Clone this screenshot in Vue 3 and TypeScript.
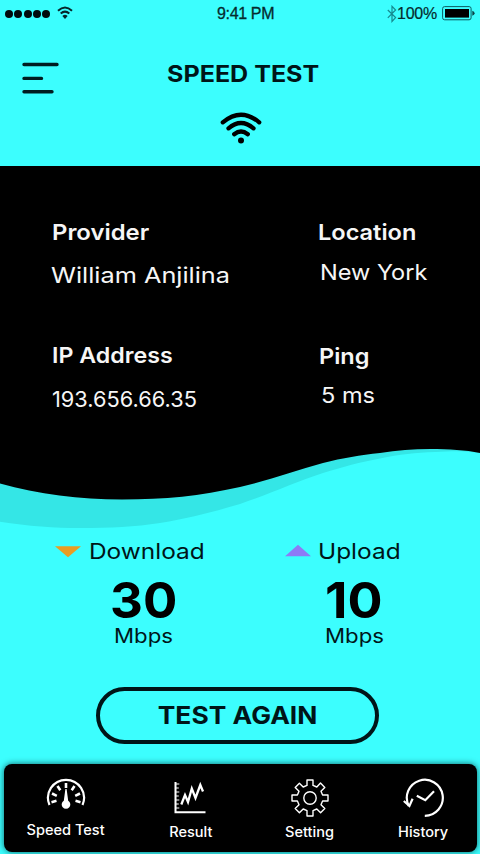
<script setup lang="ts">
interface Detail {
  id: string
  label: string
  value: string
}

interface Reading {
  id: string
  label: string
  value: number
  unit: string
}

const details: Detail[] = [
  { id: 'provider', label: 'Provider', value: 'William Anjilina' },
  { id: 'location', label: 'Location', value: 'New York' },
  { id: 'ip', label: 'IP Address', value: '193.656.66.35' },
  { id: 'ping', label: 'Ping', value: '5 ms' },
]

const readings: Reading[] = [
  { id: 'download', label: 'Download', value: 30, unit: 'Mbps' },
  { id: 'upload', label: 'Upload', value: 10, unit: 'Mbps' },
]
</script>

<template>
  <main class="screen">
    <div class="status">
      <div class="signal">
        <i v-for="n in 5" :key="n" class="dot"></i>
        <svg class="wifi-small" width="16" height="14" viewBox="0 0 16 14" fill="none" stroke="#06262a" stroke-width="2">
          <path d="M1 4.8Q8 -1.7 15 4.8M3.7 7.6Q8 3.7 12.3 7.6" />
          <path d="M5.4 10Q8 7.4 10.6 10L8 13Z" fill="#06262a" stroke="none" />
        </svg>
      </div>
      <span class="clock">9:41 PM</span>
      <div class="power">
        <svg width="10" height="18" viewBox="0 0 10 18" fill="none" stroke="#158a8f" stroke-width="1.2">
          <path d="M.8 5 8.6 12.6 5 16.5V1.3L8.6 5 .8 12.8" />
        </svg>
        <span class="percent">100%</span>
        <svg class="battery" width="33" height="15" viewBox="0 0 33 15">
          <rect x=".6" y=".6" width="28.5" height="13.2" rx="2" fill="none" stroke="#0b5d62" />
          <rect x="3" y="3" width="24" height="8.6" fill="#000" />
          <path d="M30.3 4.8Q32.6 5.6 32.6 7.3T30.3 9.8Z" fill="#0b4347" />
        </svg>
      </div>
    </div>

    <header class="header">
      <svg class="menu" width="38" height="32" viewBox="0 0 38 32" stroke="#001d20" stroke-width="3.4" stroke-linecap="round">
        <path d="M2 2.5H35M2 16.4H19.5M2 29.8H30" />
      </svg>
      <h1 class="title"><span class="wide">SPEED TEST</span></h1>
      <svg class="wifi" width="42" height="32" viewBox="0 0 42 32" fill="none" stroke="#000" stroke-width="4.3" stroke-linecap="round">
        <path d="M2.8 10.3Q21 -5 39.2 10.3M8.5 16.3Q21 5.8 33.5 16.3M14.2 22.2Q21 16.8 27.8 22.2" />
        <circle cx="21" cy="28.4" r="3" fill="#000" stroke="none" />
      </svg>
    </header>

    <section class="details">
      <div v-for="d in details" :key="d.id" class="detail" :class="d.id">
        <h2><span class="wide">{{ d.label }}</span></h2>
        <p><span class="wide">{{ d.value }}</span></p>
      </div>
    </section>

    <svg class="wave" width="480" height="90" viewBox="0 0 480 90">
      <path d="M0 81.7C28 86 55 88 80 88C110 88 135 87 160 83C190 78 213 72 240 64C270 54 295 42 323 33C343 27 360 22 380 18.5C400 14.5 415 12.5 435 12C455 11 465 11 480 13V0H0Z" fill="#34e6e6" />
      <path d="M0 43.5C38 54 80 59.5 122 59.5C165 59.5 200 56 240 47C270 40 295 30.5 323 23C343 18 360 15 380 13C397 10.5 413 9 430 9C450 9 465 10 480 13V0H0Z" fill="#000" />
    </svg>

    <section class="readings">
      <div v-for="r in readings" :key="r.id" class="reading" :class="r.id">
        <div class="caption">
          <svg width="26" height="14" viewBox="0 0 26 14">
            <path v-if="r.id === 'download'" d="M0 2.3H26L13 13.3Z" fill="#e99d22" />
            <path v-else d="M0 12.3H26L13 .8Z" fill="#8d7bf6" />
          </svg>
          <span class="wide">{{ r.label }}</span>
        </div>
        <strong class="amount"><span class="wide">{{ r.value }}</span></strong>
        <span class="unit"><span class="wide">{{ r.unit }}</span></span>
      </div>
    </section>

    <button class="again" type="button"><span class="wide">TEST AGAIN</span></button>

    <nav class="tabs">
      <a class="tab speed">
        <svg width="40" height="36" viewBox="0 0 40 36" fill="none" stroke="#fff" stroke-width="2.2">
          <path d="M3.5 30A18 18 0 1 1 36.5 30" />
          <path d="M20 8V13M11.5 11 14.3 15.2M28.5 11 25.7 15.2M6 18.5 10.8 20.8M34 18.5 29.2 20.8M5.5 27.2 10.5 25.8M34.5 27.2 29.5 25.8" stroke-width="2.6" />
          <path d="M19.4 14H20.6L22.2 25.7A4.3 4.3 0 1 1 17.8 25.7Z" fill="#fff" stroke="none" />
        </svg>
        <span class="wide">Speed Test</span>
      </a>
      <a class="tab result">
        <svg width="40" height="36" viewBox="0 0 40 36" fill="none" stroke="#fff">
          <path d="M4.5 3V33.3H34.5" stroke-width="2" />
          <path d="M5 5H8.3M5 9H7.8M5 13H8.3M5 17H7.8M5 21H8.3M5 25H7.8M5 29H8.3" stroke-width="1.2" />
          <path d="M10.3 25.5 14 16 17 23 20.8 9.5 24.5 19 29.3 6 32 12.5" stroke-width="2.3" />
        </svg>
        <span class="wide">Result</span>
      </a>
      <a class="tab setting">
        <svg width="40" height="40" viewBox="0 0 40 40" fill="none" stroke="#fff" stroke-width="1.4" stroke-linejoin="round">
          <path d="M17 2H23V7.4L26.8 9 30.5 5.1 34.8 9.4 31 13.2 32.6 17H38V23H32.6L31 26.8 34.8 30.6 30.6 34.8 26.8 31 23 32.6V38H17V32.6L13.2 31 9.4 34.8 5.2 30.6 9 26.8 7.4 23H2V17H7.4L9 13.2 5.2 9.4 9.4 5.2 13.2 9 17 7.4Z" />
          <circle cx="20" cy="20" r="6.2" />
        </svg>
        <span class="wide">Setting</span>
      </a>
      <a class="tab history">
        <svg width="42" height="40" viewBox="0 0 42 40" fill="none" stroke="#fff" stroke-width="2.2">
          <path d="M5.8 28A18 18 0 1 1 21.8 37.8" />
          <path d="M.8 23 6.4 28 9.6 20.8" />
          <path d="M13.8 17.7 22.3 22.2 31 13.2" />
        </svg>
        <span class="wide">History</span>
      </a>
    </nav>
  </main>
</template>

<style>
body {
  background: #3ff;
}
</style>

<style scoped>
.screen {
  display: flex;
  flex-direction: column;
  width: 480px;
  height: 854px;
  overflow: hidden;
  background: #3cfefe;
  color: #001518;
  font-family: Inter, "Open Sans", sans-serif;
}
h1, h2, p { margin: 0; }
span { white-space: nowrap; }
.wide {
  display: inline-block;
  transform: scaleX(var(--stretch, 1.07));
  transform-origin: 0 50%;
}

.status {
  display: grid;
  grid-template-columns: 217px 170px 1fr;
  height: 27px;
  font-family: "Liberation Sans", sans-serif;
  font-size: 16px;
  line-height: 27px;
  color: #062b2e;
}
.signal { display: flex; align-items: center; gap: 1.3px; padding-left: 5px; }
.dot { width: 8px; height: 8px; border-radius: 50%; background: #000b0c; }
.wifi-small { margin: -2px 0 0 6px; }
.clock { letter-spacing: -0.35px; -webkit-text-stroke: 0.3px; }
.power { display: flex; align-items: center; }
.percent { letter-spacing: -0.25px; -webkit-text-stroke: 0.2px; }
.battery { margin-left: 5px; }

.header {
  display: grid;
  grid-template-columns: 22px 143px 1fr;
  grid-template-rows: 92px 47px;
  height: 139px;
}
.menu { grid-column: 2; margin-top: 34.5px; }
.title {
  --stretch: 1.09;
  grid-column: 3;
  padding-left: 1.5px;
  font-size: 23px;
  font-weight: 650;
  line-height: 94px;
}
.wifi { grid-column: 3; grid-row: 2; margin: -7px 0 0 54.5px; }

.details {
  display: grid;
  grid-template-columns: 267px 1fr;
  grid-template-rows: 123px 113px;
  height: 226px;
  padding: 51px 0 0 51px;
  background: #000;
  color: #f6f6f6;
}
.detail h2 { padding-left: 1px; font-size: 22px; font-weight: 600; line-height: 30px; }
.detail p { font-size: 22px; font-weight: 400; line-height: 30px; }
.provider h2 { --stretch: 1.085; }
.provider p { --stretch: 1.15; margin-top: 13px; }
.location h2 { padding-left: 0; }
.location p { margin-top: 10px; padding-left: 1.5px; }
.ip h2 { --stretch: 1.055; }
.ip p { --stretch: 0.99; margin-top: 14px; padding-left: 0.5px; }
.ping h2 { margin-top: 1px; }
.ping p { margin-top: 9px; padding-left: 2.5px; }

.wave { display: block; flex: none; margin-top: -3px; }

.readings {
  display: grid;
  grid-template-columns: 230px 1fr;
  height: 117px;
  padding-left: 55px;
  margin-top: 6px;
}
.reading { --stretch: 1.11; display: flex; flex-direction: column; }
.caption { display: flex; align-items: center; gap: 8px; font-size: 22px; line-height: 30px; }
.upload .caption { gap: 7px; }
.amount {
  --stretch: 1.02;
  margin: 13px 0 0 55px;
  color: #000;
  font-size: 50px;
  font-weight: 700;
  line-height: 42px;
}
.unit { margin: 4px 0 0 59px; font-size: 20px; line-height: 22px; }
.upload .amount { --stretch: 1.04; margin-left: 40px; }
.upload .unit { margin-left: 40px; }

.again {
  --stretch: 1.1;
  width: 283px;
  height: 57px;
  flex: none;
  margin: 34px 0 0 96px;
  padding: 0;
  border: 4px solid #001518;
  border-radius: 29px;
  background: none;
  color: #001518;
  font: 700 24px/48px Inter, sans-serif;
}
.again .wide, .tab .wide { transform-origin: 50% 50%; }

.tabs {
  --stretch: 1.04;
  display: grid;
  grid-template-columns: 124px 126px 112px 1fr;
  width: 473px;
  height: 88px;
  flex: none;
  margin: 20px 0 0 4px;
  border-radius: 8px;
  background: #000;
  box-shadow: 0 0 6px rgba(0, 40, 45, 0.75);
  color: #fff;
  font-size: 14px;
  font-weight: 500;
}
.tab { display: flex; flex-direction: column; align-items: center; line-height: 20px; }
.tab svg { flex: none; }
.speed { padding-top: 11px; gap: 9px; }
.result { padding-top: 15px; gap: 7px; }
.setting { padding-top: 14px; gap: 4px; }
.history { padding: 14px 0 0 4px; gap: 4px; }
</style>
